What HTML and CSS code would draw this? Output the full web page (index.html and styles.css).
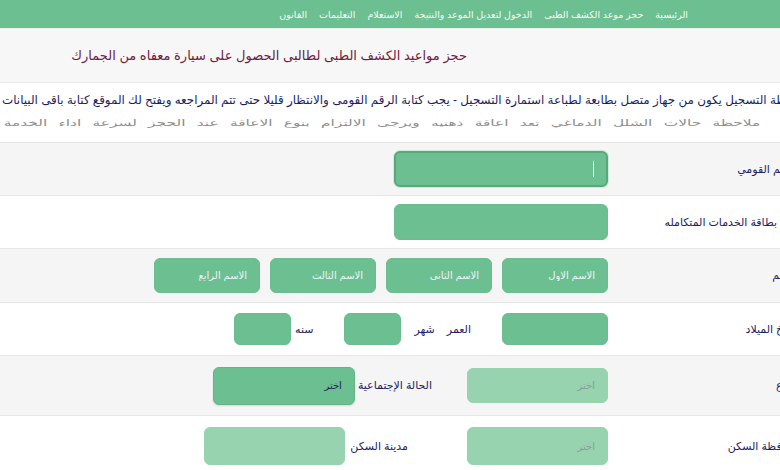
FILE: index.html
```html
<!DOCTYPE html>
<html lang="ar">
<head>
    <meta charset="UTF-8">
    <meta name="viewport" content="width=device-width, initial-scale=1.0">
    <title>حجز مواعيد الكشف الطبى</title>
    <link rel="stylesheet" href="styles.css">
</head>
<body>
    <div class="page" dir="rtl">
        <nav class="topnav">
            <a href="#">الرئيسية</a>
            <a href="#">حجز موعد الكشف الطبى</a>
            <a href="#">الدخول لتعديل الموعد والنتيجة</a>
            <a href="#">الاستعلام</a>
            <a href="#">التعليمات</a>
            <a href="#">القانون</a>
        </nav>

        <div class="title-bar">
            <h1>حجز مواعيد الكشف الطبى لطالبى الحصول على سيارة معفاه من الجمارك</h1>
        </div>

        <div class="notes">
            <p class="note-main"><span>ملاحظة التسجيل يكون من جهاز متصل بطابعة لطباعة استمارة التسجيل - يجب كتابة الرقم القومى والانتظار قليلا حتى تتم المراجعه ويفتح لك الموقع كتابة باقى البيانات</span></p>
            <p class="note-sub"><span>ملاحظة حالات الشلل الدماغي تعد اعاقة ذهنيه ويرجى الالتزام بنوع الاعاقة عند الحجز لسرعة اداء الخدمة</span></p>
        </div>

        <form class="form">
            <div class="row shaded">
                <label class="lbl">الرقم القومي</label>
                <div class="ctrls">
                    <span class="focus-wrap">
                        <input class="fld fld-wide focused" type="text">
                        <span class="caret"></span>
                    </span>
                </div>
            </div>

            <div class="row">
                <label class="lbl">رقم بطاقة الخدمات المتكامله</label>
                <div class="ctrls">
                    <input class="fld fld-wide" type="text">
                </div>
            </div>

            <div class="row shaded row-names">
                <label class="lbl">الاسم</label>
                <div class="ctrls names">
                    <input class="fld fld-name" type="text" placeholder="الاسم الاول">
                    <input class="fld fld-name" type="text" placeholder="الاسم الثاني">
                    <input class="fld fld-name" type="text" placeholder="الاسم الثالث">
                    <input class="fld fld-name" type="text" placeholder="الاسم الرابع">
                </div>
            </div>

            <div class="row">
                <label class="lbl">تاريخ الميلاد</label>
                <div class="ctrls">
                    <input class="fld fld-date" type="text">
                    <span class="txt age">العمر</span>
                    <span class="txt month">شهر</span>
                    <input class="fld fld-small" type="text">
                    <span class="txt year">سنه</span>
                    <input class="fld fld-small" type="text">
                </div>
            </div>

            <div class="row shaded row-tall">
                <label class="lbl">النوع</label>
                <div class="ctrls">
                    <select class="sel sel-light">
                        <option>اختر</option>
                    </select>
                    <span class="txt social">الحالة الإجتماعية</span>
                    <select class="sel sel-dark">
                        <option>اختر</option>
                    </select>
                </div>
            </div>

            <div class="row row-last">
                <label class="lbl">محافظة السكن</label>
                <div class="ctrls">
                    <select class="sel sel-light sel-tall">
                        <option>اختر</option>
                    </select>
                    <span class="txt city">مدينة السكن</span>
                    <input class="fld fld-city" type="text">
                </div>
            </div>
        </form>
    </div>
</body>
</html>
```

FILE: styles.css
```css
body {
    margin: 0;
    background-color: #ffffff;
    font-family: Arial, "DejaVu Sans", sans-serif;
    overflow: hidden;
}

.page {
    width: 800px;
}

/* شريط القوائم */
.topnav {
    display: flex;
    align-items: center;
    height: 28px;
    padding-right: 106px;
    background-color: #6cbf91;
    border-bottom: 1px solid #e9f2ec;
}

.topnav a {
    color: #f4fbf6;
    font-size: 9.5px;
    text-decoration: none;
    padding: 0 6px;
}

.title-bar {
    height: 53px;
    display: flex;
    align-items: center;
    padding-right: 333px;
    background-color: #f7f7f7;
    border-bottom: 1px solid #e6e6e6;
}

.title-bar h1 {
    margin: 0;
    font-size: 13px;
    font-weight: normal;
    color: #6e1d42;
}

.notes {
    height: 59px;
    padding-right: 26px;
    padding-left: 2px;
    white-space: nowrap;
}

.note-main,
.note-sub {
    display: flex;
    margin: 0;
}

.note-main span,
.note-sub span {
    flex-shrink: 0;
}

/* السطر الاول بيبدأ من الشمال وبيتقص من اليمين زي الأصل */
.note-main {
    justify-content: flex-end;
    padding-top: 10px;
    font-size: 11.9px;
    color: #1b1d63;
}

.note-sub {
    margin: 11px 14px 0 0;
    font-size: 8.8px;
    word-spacing: 4px;
    color: #8d8d8d;
}

.note-sub span {
    transform: scaleX(1.75);
    transform-origin: right center;
}

/* صفوف الفورم */
.form {
    margin: 0;
}

.row {
    display: flex;
    align-items: center;
    height: 52px;
    border-top: 1px solid #e6e6e6;
}

.row.shaded {
    background-color: #f5f5f5;
}

.row-names {
    height: 53px;
}

.row-tall {
    height: 59px;
}

.row-last {
    height: 60px;
}

.lbl {
    width: 192px;
    padding-right: 2px;
    box-sizing: border-box;
    font-size: 11px;
    color: #1f2160;
    white-space: nowrap;
}

.ctrls {
    display: flex;
    align-items: center;
}

.names {
    gap: 10px;
}

.fld,
.sel {
    font-family: inherit;
    font-size: 10px;
    box-sizing: border-box;
    border-radius: 6px;
    border: 1px solid #6abd8e;
    background-color: #6cbf91;
    color: #ffffff;
    padding: 0 12px;
    outline: none;
}

.fld::placeholder {
    color: #eef4f8;
}

.fld-wide {
    width: 214px;
    height: 36px;
}

.focus-wrap {
    position: relative;
    display: flex;
}

.focused {
    border: 2px solid #58a87b;
    box-shadow: 0 0 0 1px #cfe9da;
}

.caret {
    position: absolute;
    right: 14px;
    top: 10px;
    width: 1px;
    height: 16px;
    background-color: #ffffff;
}

.fld-name {
    width: 106px;
    height: 35px;
}

.fld-date {
    width: 106px;
    height: 32px;
    margin-left: 2px;
}

.fld-small {
    width: 57px;
    height: 32px;
}

.fld-city {
    width: 141px;
    height: 38px;
    background-color: #98d3b0;
    border-color: #98d3b0;
}

.txt {
    font-size: 11px;
    color: #1f2160;
    white-space: nowrap;
}

.age {
    margin-right: 29px;
}

.month {
    margin-right: 12px;
    margin-left: 13px;
}

.year {
    margin-right: 31px;
    margin-left: 4px;
}

.sel {
    -webkit-appearance: none;
    appearance: none;
    width: 141px;
    height: 35px;
}

.sel-light {
    background-color: #98d3b0;
    border-color: #98d3b0;
    color: #8d9a9a;
    margin-left: 2px;
}

.sel-tall {
    height: 38px;
}

.sel-dark {
    width: 142px;
    height: 38px;
    background-color: #6cbf91;
    border-color: #64b487;
    color: #1f2160;
    margin-right: 3px;
    box-shadow: 0 1px 2px rgba(0, 0, 0, 0.12);
}

.social {
    margin-right: 33px;
}

.city {
    margin-right: 57px;
    margin-left: 5px;
}
```
